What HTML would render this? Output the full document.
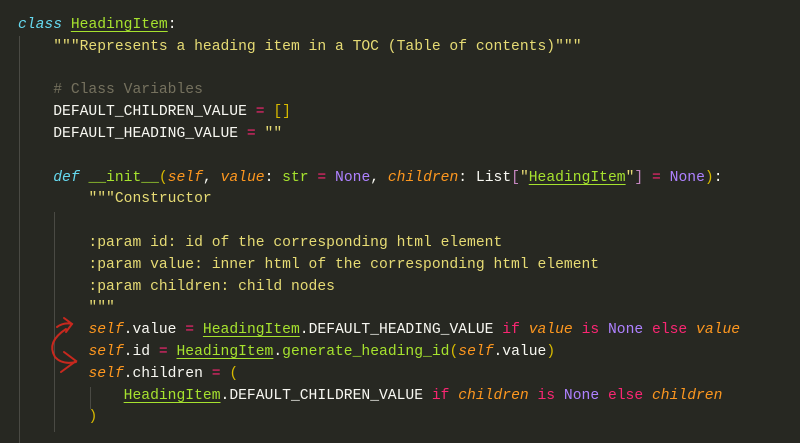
<!DOCTYPE html>
<html><head><meta charset="utf-8"><style>
html,body{margin:0;padding:0;background:#272822;width:800px;height:443px;overflow:hidden}
pre{margin:0;position:absolute;left:18px;top:15px;font-family:"Liberation Mono",monospace;font-size:14.68px;line-height:21.8px;color:#f8f8f2;white-space:pre}
.k{color:#66d9ef;font-style:italic}
.c{color:#a6e22e;text-decoration:underline;text-decoration-color:#a6e22e;text-underline-offset:3px}
.f{color:#a6e22e}
.s{color:#e6db74}
.m{color:#75715e}
.o{color:#f92672}
.p{color:#fd971f;font-style:italic}
.n{color:#ae81ff}
.b{color:#d7ba00}
.q{color:#c586c0}
.g{position:absolute;width:1px;background:#4a4a44}
</style></head><body>
<div class="g" style="left:19px;top:36px;height:407px"></div>
<div class="g" style="left:54px;top:212px;height:220px"></div>
<div class="g" style="left:90px;top:387px;height:22px"></div>
<pre><span class="k">class</span> <span class="c">HeadingItem</span>:
    <span class="s">"""Represents a heading item in a TOC (Table of contents)"""</span>

    <span class="m"># Class Variables</span>
    DEFAULT_CHILDREN_VALUE <span class="o">=</span> <span class="b">[]</span>
    DEFAULT_HEADING_VALUE <span class="o">=</span> <span class="s">""</span>

    <span class="k">def</span> <span class="f">__init__</span><span class="b">(</span><span class="p">self</span>, <span class="p">value</span>: <span style="color:#a6e22e">str</span> <span class="o">=</span> <span class="n">None</span>, <span class="p">children</span>: List<span class="q">[</span><span class="s">"</span><span class="c">HeadingItem</span><span class="s">"</span><span class="q">]</span> <span class="o">=</span> <span class="n">None</span><span class="b">)</span>:
        <span class="s">"""Constructor

        :param id: id of the corresponding html element
        :param value: inner html of the corresponding html element
        :param children: child nodes
        """</span>
        <span class="p">self</span>.value <span class="o">=</span> <span class="c">HeadingItem</span>.DEFAULT_HEADING_VALUE <span class="o">if</span> <span class="p">value</span> <span class="o">is</span> <span class="n">None</span> <span class="o">else</span> <span class="p">value</span>
        <span class="p">self</span>.id <span class="o">=</span> <span class="c">HeadingItem</span>.<span class="f">generate_heading_id</span><span class="b">(</span><span class="p">self</span>.value<span class="b">)</span>
        <span class="p">self</span>.children <span class="o">=</span> <span class="b">(</span>
            <span class="c">HeadingItem</span>.DEFAULT_CHILDREN_VALUE <span class="o">if</span> <span class="p">children</span> <span class="o">is</span> <span class="n">None</span> <span class="o">else</span> <span class="p">children</span>
        <span class="b">)</span></pre>
<svg style="position:absolute;left:0;top:0" width="800" height="443">
<g fill="none" stroke="#c8281e" stroke-width="2" stroke-linecap="round">
<path d="M57 327 Q64 322 72 324"/>
<path d="M64 318 L72 324 L66 332"/>
<path d="M66 329 Q46 342 55 357 Q62 365 76 362"/>
<path d="M64 352 L76 361 L61 372"/>
</g></svg>
</body></html>
